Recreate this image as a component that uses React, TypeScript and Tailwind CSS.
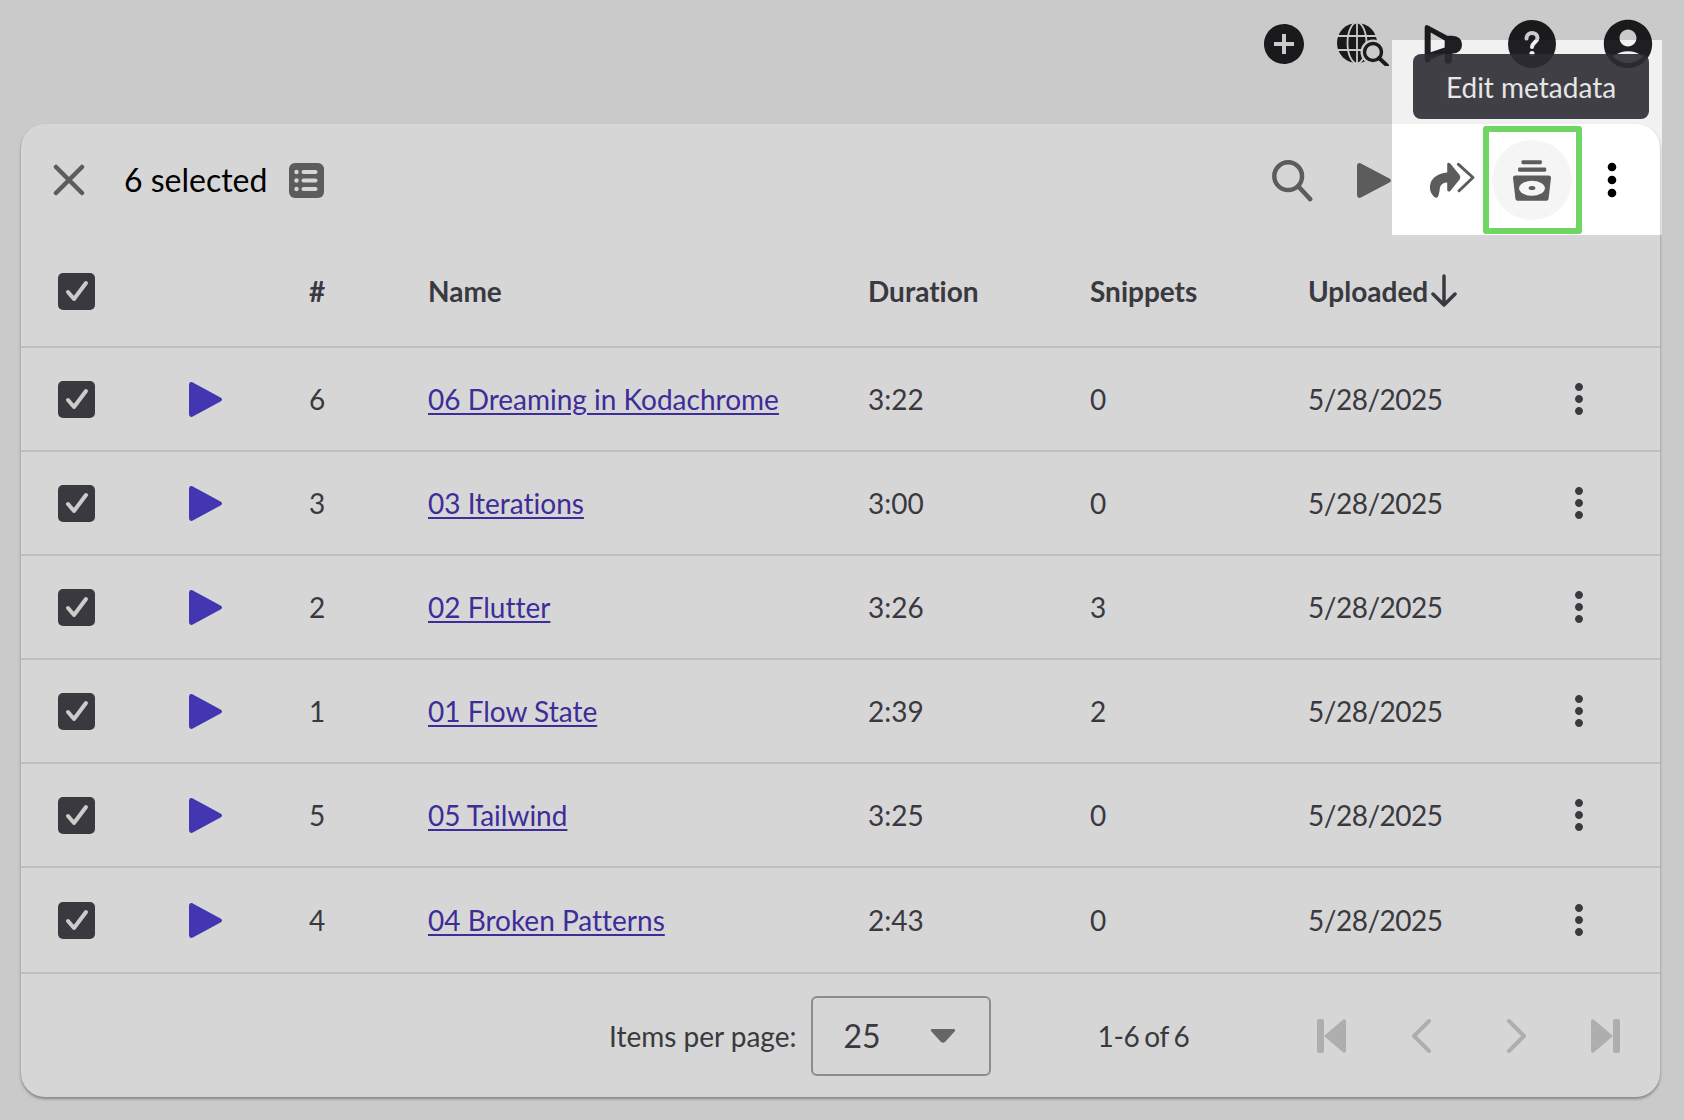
import { MdAddCircle, MdAccountCircle, MdMoreVert } from "react-icons/md";

const rows = [
  ["6", "06 Dreaming in Kodachrome", "3:22", "0"],
  ["3", "03 Iterations", "3:00", "0"],
  ["2", "02 Flutter", "3:26", "3"],
  ["1", "01 Flow State", "2:39", "2"],
  ["5", "05 Tailwind", "3:25", "0"],
  ["4", "04 Broken Patterns", "2:43", "0"],
];

const grid = "grid grid-cols-[127px_161px_119px_440px_222px_218px_1fr] items-center";

function Check() {
  return (
    <span className="flex h-[37px] w-[37px] items-center justify-center rounded-[5px] bg-[#45454c]">
      <svg width="26" height="26" viewBox="0 0 26 26" fill="none" stroke="#f4f4f4" strokeWidth="4" strokeLinecap="round" strokeLinejoin="round">
        <path d="M4 14 10 21 22 5" />
      </svg>
    </span>
  );
}

function Play({ color, w = 33, h = 35 }: { color: string; w?: number; h?: number }) {
  return (
    <svg width={w} height={h} viewBox="0 0 33 35" preserveAspectRatio="none">
      <path d="M0 3C0 .8 1.800-.6 3.800.5L31.500 15.500c2 1 2 3 0 4L3.800 34.500C1.800 35.600 0 34.200 0 32Z" fill={color} />
    </svg>
  );
}

function Globe() {
  return (
    <svg width="56" height="44" viewBox="0 0 56 44">
      <circle cx="20" cy="21" r="20" fill="#1f1f23" />
      <g fill="none" stroke="#f1f1f1" strokeWidth="1.800">
        <ellipse cx="20" cy="21" rx="9.500" ry="20.500" />
        <path d="M20 1V41M1 14H39M1 28H39" />
      </g>
      <circle cx="36" cy="30" r="12.500" fill="#f1f1f1" />
      <circle cx="36" cy="30" r="8.500" fill="none" stroke="#1f1f23" strokeWidth="3.400" />
      <path d="M42 36 50 43.500" stroke="#1f1f23" strokeWidth="3.800" strokeLinecap="round" />
    </svg>
  );
}

function Megaphone() {
  return (
    <svg width="40" height="42" viewBox="525 40 120 125" fill="#1f1f23">
      <path fillRule="evenodd" d="M530 52Q532 42 542 48L598 78H612Q642 80 642 105 642 130 612 132V152Q612 162 600 162 590 162 590 152V132L548 148V150Q546 160 538 158 530 158 530 150ZM548 68V127L590 113V92Z" />
    </svg>
  );
}

function HelpIcon() {
  return (
    <svg width="48" height="48" viewBox="0 0 48 48">
      <circle cx="24" cy="24" r="24" fill="#1f1f23" />
      <path d="M18.500 18.500C18.500 15 21 13 24 13S29.500 15 29.500 18C29.500 22 24 22.500 24 27" fill="none" stroke="#f1f1f1" strokeWidth="4" strokeLinecap="round" />
      <circle cx="24" cy="33.500" r="2.600" fill="#f1f1f1" />
    </svg>
  );
}

function ListIcon() {
  return (
    <svg width="35" height="35" viewBox="0 0 35 35">
      <rect width="35" height="35" rx="6" fill="#6e6e6e" />
      <g fill="#ffffff">
        <circle cx="7.500" cy="9" r="2.200" /><circle cx="7.500" cy="17.500" r="2.200" /><circle cx="7.500" cy="26" r="2.200" />
        <rect x="12.500" y="7" width="16" height="4" rx="2" /><rect x="12.500" y="15.500" width="16" height="4" rx="2" /><rect x="12.500" y="24" width="16" height="4" rx="2" />
      </g>
    </svg>
  );
}

function ForwardIcon() {
  return (
    <svg width="47" height="38" viewBox="55 60 140 115" fill="#5c5c5c">
      <path d="M112 68Q115 62 122 68L150 103Q154 110 150 115L122 150Q115 156 112 148V125Q95 125 90 140 88 160 84 168 80 174 72 168 58 155 60 135 65 100 112 95Z" />
      <path d="M146 70 190 110 148 150" fill="none" stroke="#5c5c5c" strokeWidth="9" strokeLinecap="round" strokeLinejoin="round" />
    </svg>
  );
}

function MetadataIcon() {
  return (
    <svg width="38" height="41" viewBox="820 480 112 120">
      <rect x="845" y="480" width="60" height="12" rx="4" fill="#5c5c5c" />
      <rect x="835" y="502" width="83" height="12" rx="4" fill="#5c5c5c" />
      <path d="M820 532Q820 525 828 525H924Q932 525 932 532L925 592Q924 600 916 600H836Q828 600 827 592Z" fill="#5c5c5c" />
      <ellipse cx="876" cy="563" rx="38" ry="22" fill="#f5f5f5" />
      <ellipse cx="876" cy="562" rx="10" ry="6" fill="#5c5c5c" />
    </svg>
  );
}

function SkipPrev({ flip }: { flip?: boolean }) {
  return (
    <svg width="29" height="34" viewBox="0 0 29 34" fill="currentColor" className={flip ? "-scale-x-100" : ""}>
      <rect x="0" y="0" width="7" height="34" rx="2" />
      <path d="M7 17 26 .8C27.500-.4 29 .5 29 2.500V31.500C29 33.500 27.500 34.400 26 33.200Z" />
    </svg>
  );
}

export default function App() {
  return (
    <div className="relative h-[1120px] w-[1684px] overflow-hidden bg-[#f1f1f1] font-['Lato','Liberation_Sans',sans-serif] text-[28px] text-[#45454c] [font-variant-ligatures:none]">
      <header className="flex h-[124px] items-start justify-end">
        <div className="mt-[15px] flex items-center">
          <MdAddCircle size={48} className="text-[#1f1f23]" />
          <span className="ml-[29px] mr-[-9px]"><Globe /></span>
          <span className="ml-[39px]"><Megaphone /></span>
          <span className="ml-[45px]"><HelpIcon /></span>
          <MdAccountCircle size={58} className="ml-[43px] mr-[27px] text-[#1f1f23]" />
        </div>
      </header>

      <main className="mx-[21px] flex h-[973px] w-[1639px] flex-col overflow-hidden rounded-[24px] bg-white shadow-[0_2px_3px_rgba(0,0,0,0.35)]">
        <div className="flex h-[112px] shrink-0 items-center">
          <svg width="32" height="32" viewBox="0 0 32 32" fill="none" stroke="#6e6e6e" strokeWidth="4.500" strokeLinecap="round" className="ml-[32px]">
            <path d="M3 3 29 29M29 3 3 29" />
          </svg>
          <span className="ml-[39px] text-[32px] leading-none text-black">6 selected</span>
          <span className="ml-[22px]"><ListIcon /></span>
          <div className="ml-auto flex items-center">
            <svg width="44" height="44" viewBox="0 0 46 46" fill="none" stroke="#6e6e6e" strokeWidth="4.700" strokeLinecap="round">
              <circle cx="19" cy="19" r="14.500" /><path d="M30 30 42 43" />
            </svg>
            <span className="ml-[43px]"><Play color="#6e6e6e" w={34} h={35} /></span>
            <span className="ml-[37px]"><ForwardIcon /></span>
            <span className="ml-[17px] flex h-[80px] w-[80px] items-center justify-center rounded-full bg-[#f5f5f5]"><MetadataIcon /></span>
            <MdMoreVert size={52} className="ml-[14px] mr-[22px] text-black" />
          </div>
        </div>

        <div className={`${grid} h-[112px] shrink-0 border-b-2 border-[#e4e4e4] font-bold`}>
          <span className="pl-[37px]"><Check /></span>
          <span />
          <span>#</span>
          <span>Name</span>
          <span>Duration</span>
          <span>Snippets</span>
          <span className="flex items-center">
            Uploaded
            <svg width="26" height="34" viewBox="0 0 26 34" fill="none" stroke="currentColor" strokeWidth="3.500" strokeLinecap="round" strokeLinejoin="round" className="ml-[3px]">
              <path d="M13 2V31M2 20 13 31 24 20" />
            </svg>
          </span>
        </div>

        {rows.map(([n, name, dur, snip], i) => (
          <div key={n} className={`${grid} ${i === 5 ? "h-[106px]" : "h-[104px]"} shrink-0 border-b-2 border-[#e4e4e4]`}>
            <span className="pl-[37px]"><Check /></span>
            <span className="pl-[41px]"><Play color="#5240d6" /></span>
            <span>{n}</span>
            <a className="w-fit text-[#4a35b8] underline underline-offset-[3px]">{name}</a>
            <span>{dur}</span>
            <span>{snip}</span>
            <span className="flex items-center justify-between pr-[57px] tracking-[-0.5px]">5/28/2025<MdMoreVert size={48} /></span>
          </div>
        ))}

        <div className="flex flex-1 items-center">
          <span className="ml-[588px]">Items per page:</span>
          <div className="ml-[14px] flex h-[80px] w-[180px] items-center rounded-[6px] border-2 border-[#a8a8a8] pl-[31px] text-[32px]">
            25
            <svg width="26" height="16" viewBox="0 0 26 16" className="ml-[49px]"><path d="M2 1H24C25 1 25.500 2 25 3L15 14C14 15 12 15 11 14L1 3C.5 2 1 1 2 1Z" fill="#7a7a7a" /></svg>
          </div>
          <span className="ml-[107px] tracking-[-0.3px] [word-spacing:-2px]">1-6 of 6</span>
          <div className="ml-[128px] flex items-center text-[#d0d0d0]">
            <SkipPrev />
            <svg width="20" height="34" viewBox="0 0 20 34" fill="none" stroke="currentColor" strokeWidth="4" strokeLinecap="round" strokeLinejoin="round" className="ml-[65px]"><path d="M18 2 3 17 18 32" /></svg>
            <svg width="20" height="34" viewBox="0 0 20 34" fill="none" stroke="currentColor" strokeWidth="4" strokeLinecap="round" strokeLinejoin="round" className="ml-[76px]"><path d="M2 2 17 17 2 32" /></svg>
            <span className="ml-[64px]"><SkipPrev flip /></span>
          </div>
        </div>
      </main>

      <div className="pointer-events-none absolute left-[1392px] top-[40px] h-[195px] w-[270px] shadow-[0_0_0_2000px_rgba(0,0,0,0.16)]" />
      <div className="absolute left-[1483px] top-[126px] h-[108px] w-[99px] rounded-[3px] border-[6px] border-[#6fd663]" />
      <div className="absolute left-[1413px] top-[54px] flex h-[65px] w-[236px] items-center justify-center rounded-[8px] bg-[rgba(43,43,50,0.9)] text-[#e6e6e6]">Edit metadata</div>
    </div>
  );
}
